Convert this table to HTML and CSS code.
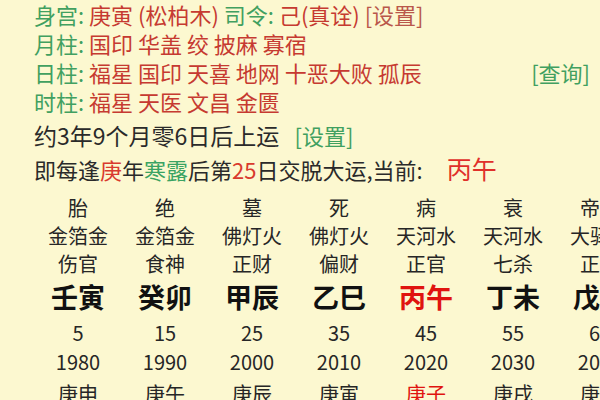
FILE: index.html
```html
<!DOCTYPE html>
<html lang="zh">
<head>
<meta charset="utf-8">
<link rel="stylesheet" href="styles.css">
</head>
<body>
<div class="page">
  <div class="info">
    <div class="line"><span class="lbl">身宫:</span> <span class="val">庚寅 (松柏木)</span> <span class="lbl">司令:</span> <span class="val">己(真诠)</span> <span class="set">[设置]</span></div>
    <div class="line"><span class="lbl">月柱:</span> <span class="val">国印 华盖 绞 披麻 寡宿</span></div>
    <div class="line row"><span><span class="lbl">日柱:</span> <span class="val">福星 国印 天喜 地网 十恶大败 孤辰</span></span><span class="query">[查询]</span></div>
    <div class="line"><span class="lbl">时柱:</span> <span class="val">福星 天医 文昌 金匮</span></div>
  </div>
  <div class="start">约3年9个月零6日后上运 <span class="set2">[设置]</span></div>
  <div class="rule">即每逢<span class="red">庚</span>年<span class="green">寒露</span>后第<span class="red">25</span>日交脱大运,当前: <span class="cur">丙午</span></div>
  <div class="grid">
    <div class="col"><div>胎</div><div>金箔金</div><div>伤官</div><div class="big">壬寅</div><div class="num">5</div><div class="num">1980</div><div class="last">庚申</div></div>
    <div class="col"><div>绝</div><div>金箔金</div><div>食神</div><div class="big">癸卯</div><div class="num">15</div><div class="num">1990</div><div class="last">庚午</div></div>
    <div class="col"><div>墓</div><div>佛灯火</div><div>正财</div><div class="big">甲辰</div><div class="num">25</div><div class="num">2000</div><div class="last">庚辰</div></div>
    <div class="col"><div>死</div><div>佛灯火</div><div>偏财</div><div class="big">乙巳</div><div class="num">35</div><div class="num">2010</div><div class="last">庚寅</div></div>
    <div class="col"><div>病</div><div>天河水</div><div>正官</div><div class="big hot">丙午</div><div class="num">45</div><div class="num">2020</div><div class="last hot">庚子</div></div>
    <div class="col"><div>衰</div><div>天河水</div><div>七杀</div><div class="big">丁未</div><div class="num">55</div><div class="num">2030</div><div class="last">庚戌</div></div>
    <div class="col"><div>帝旺</div><div>大驿土</div><div>正印</div><div class="big">戊申</div><div class="num">65</div><div class="num">2040</div><div class="last">庚申</div></div>
  </div>
</div>
</body>
</html>
```
FILE: styles.css
```css
html, body {
  margin: 0;
  padding: 0;
  width: 600px;
  height: 400px;
  overflow: hidden;
  background: #fcf8d0;
  font-family: "Noto Sans CJK SC", "Noto Sans", sans-serif;
}
.page {
  padding: 0 10px 0 34px;
  color: #2a2a2a;
}
.line {
  font-size: 22px;
  line-height: 29px;
  white-space: nowrap;
}
.row {
  display: flex;
  justify-content: space-between;
}
.lbl { color: #41a060; }
.val { color: #c63a31; }
.set { color: #b9574b; }
.query { color: #41a060; }
.set2 {
  color: #41a060;
  font-size: 22px;
  margin-left: 10px;
}
.start {
  font-size: 23px;
  line-height: 30px;
  margin-top: 4px;
  white-space: nowrap;
}
.rule {
  font-size: 22px;
  line-height: 36px;
  white-space: nowrap;
}
.red { color: #d93a2e; }
.green { color: #3aa363; }
.cur {
  color: #e0302a;
  font-size: 25px;
  margin-left: 19px;
}
.grid {
  display: grid;
  grid-template-columns: repeat(7, 87px);
  margin-left: 0.5px;
  margin-top: 7px;
}
.col {
  display: flex;
  flex-direction: column;
  align-items: center;
  font-size: 20px;
  line-height: 28px;
  color: #262626;
  white-space: nowrap;
}
.big {
  font-size: 27px;
  font-weight: bold;
  line-height: 38px;
  color: #111;
}
.num {
  font-size: 20px;
  line-height: 29px;
}
.col .big + .num { margin-top: 2px; }
.last { margin-top: 4px; }
.hot { color: #e0140f; }
```
